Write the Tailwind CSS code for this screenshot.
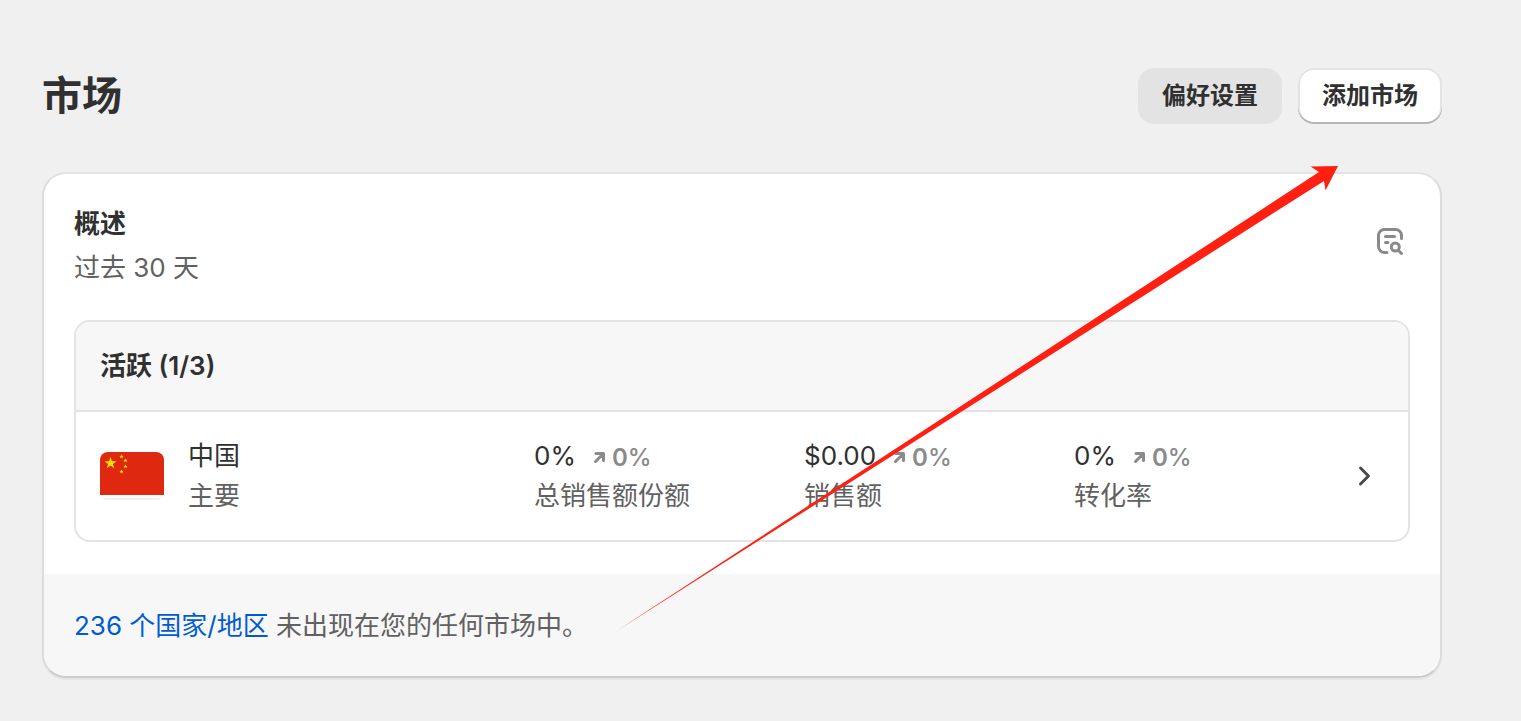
<!DOCTYPE html>
<html lang="zh-CN">
  <head>
    <meta charset="UTF-8" />
    <meta name="viewport" content="width=device-width, initial-scale=1.0" />
    <title>市场</title>
    <script src="https://cdn.jsdelivr.net/npm/@tailwindcss/browser@4"></script>
  </head>
  <body
    class="relative min-h-screen overflow-x-hidden bg-[#f0f0f0] font-['Inter','Noto_Sans_CJK_SC',sans-serif] text-[26px] leading-10 text-[#303030]"
  >
    <main class="pt-[68px] pr-[79px] pb-10 pl-[42px]">
      <header class="flex items-center justify-between">
        <h1 class="text-[40px] leading-14 font-bold">市场</h1>
        <div class="flex gap-4">
          <button
            type="button"
            class="h-14 rounded-2xl bg-[#e3e3e3] px-6 text-2xl font-bold"
          >
            偏好设置
          </button>
          <button
            type="button"
            class="h-14 rounded-2xl bg-white px-6 text-2xl font-bold shadow-[inset_0_-2px_0_#b5b5b5,inset_0_0_0_2px_#e3e3e3]"
          >
            添加市场
          </button>
        </div>
      </header>

      <section
        class="mt-12 overflow-hidden rounded-3xl border-2 border-[#dcdcdc] border-t-[#e3e3e3] border-b-[#cccccc] bg-white shadow-[0_2px_0_#e6e6e6]"
      >
        <div class="px-[30px] pt-[30px] pb-8">
          <div class="flex items-start justify-between">
            <div>
              <h2 class="font-bold">概述</h2>
              <p class="mt-1 text-[#616161]">过去 30 天</p>
            </div>
            <button type="button" aria-label="查看报告" class="mt-4 p-1">
              <svg
                class="h-8 w-8"
                viewBox="0 0 32 32"
                fill="none"
                stroke="#8a8a8a"
                stroke-width="3"
                stroke-linecap="round"
              >
                <path
                  d="M27.500 14.500V11.500a6 6 0 0 0-6-6h-11a6 6 0 0 0-6 6v11a6 6 0 0 0 6 6h2.500"
                />
                <path d="M11.500 12.500h9M11.500 18.500h2.500" />
                <circle cx="21.300" cy="23" r="4" />
                <path d="M24.500 26.500l3 3" />
              </svg>
            </button>
          </div>

          <div
            class="mt-8 overflow-hidden rounded-2xl border-2 border-[#e3e3e3]"
          >
            <h3 class="bg-[#f7f7f7] px-6 py-6 font-semibold">活跃 (1/3)</h3>
            <div
              class="grid grid-cols-[434fr_270fr_270fr_270fr_40px] items-center border-t-2 border-[#e3e3e3] px-6 py-6"
            >
              <div class="flex items-center gap-6">
                <svg class="h-12 w-16" viewBox="0 0 64 48">
                  <path
                    d="M0 8a8 8 0 0 1 8-8h48a8 8 0 0 1 8 8v32a8 8 0 0 1-8 8H8a8 8 0 0 1-8-8z"
                    fill="#f0f0f0"
                  />
                  <path
                    d="M0 43h64a8 4 0 0 1-8 3H8a8 4 0 0 1-8-3z"
                    fill="#fff"
                  />
                  <path
                    d="M0 8a8 8 0 0 1 8-8h48a8 8 0 0 1 8 8v35H0z"
                    fill="#de2910"
                  />
                  <g fill="#ffde00">
                    <path
                      d="M10.500 5l1.500 4.200h4.500l-3.600 2.700 1.300 4.300-3.700-2.600-3.700 2.600 1.300-4.300-3.600-2.700h4.500z"
                    />
                    <path
                      id="star"
                      d="M21.500 2.400l.6 1.400 1.500.1-1.200 1 .4 1.500-1.300-.8-1.300.8.4-1.500-1.200-1 1.500-.1z"
                    />
                    <use href="#star" x="4" y="4" />
                    <use href="#star" x="4" y="10" />
                    <use href="#star" x="0" y="15" />
                  </g>
                </svg>
                <div>
                  <p>中国</p>
                  <p class="text-[#616161]">主要</p>
                </div>
              </div>

              <div>
                <p class="flex">
                  0%
                  <span
                    class="flex items-center gap-1 pt-1 pl-4 text-2xl leading-9 font-semibold text-[#8a8a8a]"
                  >
                    <svg
                      class="h-4 w-4"
                      viewBox="0 0 16 16"
                      fill="none"
                      stroke="currentColor"
                      stroke-width="3"
                      stroke-linecap="round"
                      stroke-linejoin="round"
                    >
                      <path d="M3.500 11.500l7-7M4 3.500h7.500v7" />
                    </svg>
                    <span>0<span class="font-medium">%</span></span>
                  </span>
                </p>
                <p class="text-[#616161]">总销售额份额</p>
              </div>

              <div>
                <p class="flex">
                  $0.00
                  <span
                    class="flex items-center gap-1 pt-1 pl-4 text-2xl leading-9 font-semibold text-[#8a8a8a]"
                  >
                    <svg
                      class="h-4 w-4"
                      viewBox="0 0 16 16"
                      fill="none"
                      stroke="currentColor"
                      stroke-width="3"
                      stroke-linecap="round"
                      stroke-linejoin="round"
                    >
                      <path d="M3.500 11.500l7-7M4 3.500h7.500v7" />
                    </svg>
                    <span>0<span class="font-medium">%</span></span>
                  </span>
                </p>
                <p class="text-[#616161]">销售额</p>
              </div>

              <div>
                <p class="flex">
                  0%
                  <span
                    class="flex items-center gap-1 pt-1 pl-4 text-2xl leading-9 font-semibold text-[#8a8a8a]"
                  >
                    <svg
                      class="h-4 w-4"
                      viewBox="0 0 16 16"
                      fill="none"
                      stroke="currentColor"
                      stroke-width="3"
                      stroke-linecap="round"
                      stroke-linejoin="round"
                    >
                      <path d="M3.500 11.500l7-7M4 3.500h7.500v7" />
                    </svg>
                    <span>0<span class="font-medium">%</span></span>
                  </span>
                </p>
                <p class="text-[#616161]">转化率</p>
              </div>

              <button type="button" aria-label="查看中国市场">
                <svg
                  class="h-10 w-10"
                  viewBox="0 0 40 40"
                  fill="none"
                  stroke="#4a4a4a"
                  stroke-width="3"
                  stroke-linecap="round"
                  stroke-linejoin="round"
                >
                  <path d="M16.500 12l8 8-8 8" />
                </svg>
              </button>
            </div>
          </div>
        </div>

        <footer class="bg-[#f7f7f7] px-[30px] pt-8 pb-[30px] text-[#616161]">
          <a href="#" class="text-[#005bd3]">236 个国家/地区</a>
          未出现在您的任何市场中。
        </footer>
      </section>
    </main>

    <!-- arrow pointing at the add button -->
    <svg
      class="pointer-events-none absolute top-0 left-0 h-[721px] w-[1521px]"
      viewBox="0 0 1521 721"
    >
      <path
        d="M615 632L1319 172l-8.500-5.500L1338 166l-12.500 24.500-1.500-9.500z"
        fill="#ff2012"
      />
    </svg>
  </body>
</html>
